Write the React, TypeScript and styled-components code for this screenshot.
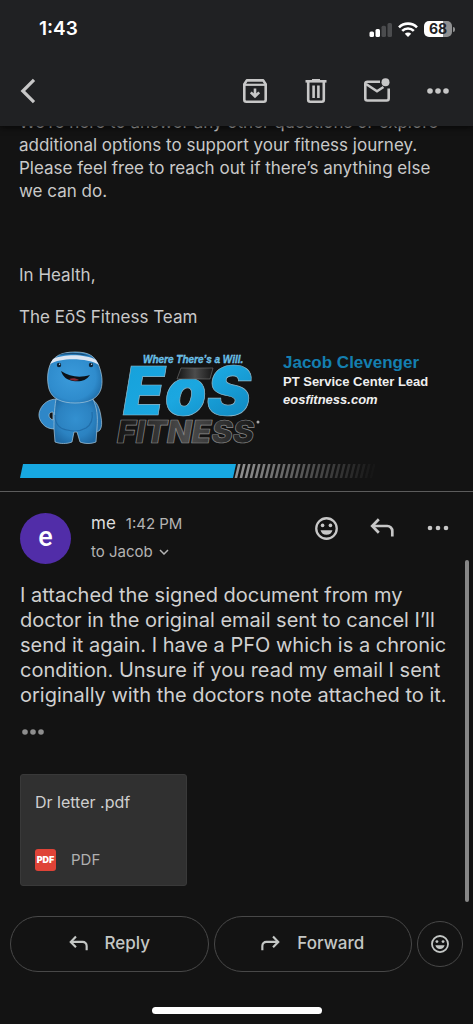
import React from "react";
import styled, { createGlobalStyle } from "styled-components";

const GlobalStyle = createGlobalStyle`
  *, *::before, *::after { box-sizing: border-box; }
  body {
    margin: 0;
    background: #131313;
    color: #c9c9c9;
    font-family: Inter, "Liberation Sans", sans-serif;
  }
  p { margin: 0; }
  button { font-family: inherit; color: inherit; cursor: pointer; }
  svg { display: block; flex: none; }
`;

const Screen = styled.div`
  min-height: 100vh;
  display: flex;
  flex-direction: column;
`;

const TopBar = styled.header`
  position: sticky;
  top: 0;
  z-index: 2;
  background: #202123;
  box-shadow: 0 1px 6px #060606;
`;

const StatusBar = styled.div`
  height: 58px;
  padding: 0 18px 0 39px;
  display: flex;
  align-items: center;
  justify-content: space-between;
`;

const Clock = styled.span`
  color: #fff;
  font-size: 19px;
  line-height: 24px;
  font-weight: 600;
`;

const StatusIcons = styled.div`
  display: flex;
  align-items: center;
  gap: 6px;
`;

const Battery = styled.span`
  display: flex;
  align-items: center;
  gap: 1px;
`;

const BatteryLevel = styled.span`
  width: 28px;
  height: 16px;
  border-radius: 5px;
  background: linear-gradient(90deg, #fff 68%, #8f9091 68%);
  color: #202123;
  font-size: 14px;
  line-height: 16px;
  font-weight: 700;
  text-align: center;
`;

const BatteryTip = styled.span`
  width: 2px;
  height: 5px;
  border-radius: 0 2px 2px 0;
  background: #8f9091;
`;

const Toolbar = styled.nav`
  height: 68px;
  padding: 0 5px 2px 0;
  display: flex;
  align-items: center;
`;

const IconButton = styled.button<{ $width: number }>`
  width: ${(p) => p.$width}px;
  height: 44px;
  padding: 0;
  border: 0;
  background: none;
  color: #c7c7c7;
  display: flex;
  align-items: center;
  justify-content: center;
`;

const Spacer = styled.div`
  flex: 1;
`;

const Thread = styled.main`
  position: relative;
  flex: 1;
`;

const EarlierMessage = styled.article`
  margin-top: -15px;
  padding: 0 19px 13px;
  border-bottom: 1px solid #5c5c5c;
  font-size: 17px;
  line-height: 23px;
`;

const Paragraph = styled.p<{ $before?: number }>`
  margin-top: ${(p) => p.$before ?? 0}px;
  white-space: nowrap;
`;

const Signature = styled.div`
  margin-top: 19px;
  display: flex;
  align-items: flex-start;
`;

const Contact = styled.address`
  padding: 5px 0 0 18px;
  color: #efefef;
  font-family: "Liberation Sans", Arial, sans-serif;
  font-size: 13px;
  line-height: 18px;
  font-weight: 700;
  font-style: normal;
  white-space: nowrap;
`;

const ContactName = styled.div`
  color: #147fb0;
  font-size: 17px;
  line-height: 20px;
`;

const SiteLink = styled.a`
  color: inherit;
  font-style: italic;
  text-decoration: none;
`;

const BarRow = styled.div`
  margin-top: 10px;
`;

const Message = styled.article`
  padding: 21px 7px 16px 20px;
`;

const MessageHeader = styled.header`
  display: flex;
  align-items: flex-start;
`;

const Avatar = styled.span`
  width: 51px;
  height: 51px;
  flex: none;
  border-radius: 50%;
  background: #512da8;
  color: #fff;
  font-family: Roboto, sans-serif;
  font-size: 27px;
  line-height: 48px;
  font-weight: 500;
  text-align: center;
`;

const Sender = styled.div`
  padding-left: 20px;
  display: flex;
  flex-direction: column;
  gap: 8px;
`;

const SenderLine = styled.div`
  display: flex;
  align-items: center;
  gap: 10px;
  font-size: 15px;
  line-height: 21px;
  color: #b4b4b4;
  white-space: nowrap;
`;

const SenderName = styled.strong`
  color: #dedede;
  font-size: 17px;
  font-weight: 400;
`;

const Recipient = styled.button`
  padding: 0;
  border: 0;
  background: none;
  display: flex;
  align-items: center;
  gap: 6px;
  font-size: 15px;
  line-height: 20px;
  color: #b4b4b4;
`;

const Actions = styled.div`
  height: 30px;
  margin-left: auto;
  display: flex;
  align-items: center;
`;

const Body = styled.p`
  margin-top: 18px;
  padding-top: 1px;
  color: #d0d0d0;
  font-size: 20px;
  line-height: 25px;
  white-space: nowrap;
`;

const QuoteToggle = styled.button`
  margin-top: 16px;
  padding: 0;
  width: 26px;
  height: 16px;
  border: 0;
  background: none;
  color: #8e8e8e;
  display: flex;
  align-items: center;
  justify-content: center;
`;

const Attachment = styled.button`
  width: 167px;
  height: 112px;
  margin-top: 34px;
  padding: 16px 14px 14px;
  border: 1px solid #393939;
  border-radius: 3px;
  background: #303030;
  display: flex;
  flex-direction: column;
  justify-content: space-between;
  text-align: left;
`;

const FileName = styled.span`
  color: #cfcfcf;
  font-size: 16px;
  line-height: 22px;
`;

const FileType = styled.span`
  display: flex;
  align-items: center;
  gap: 15px;
  color: #b0b0b0;
  font-size: 15px;
  line-height: 22px;
`;

const PdfBadge = styled.span`
  width: 21px;
  height: 22px;
  border-radius: 3px;
  background: #df4337;
  color: #fff;
  font-size: 9px;
  line-height: 22px;
  font-weight: 900;
  text-align: center;
`;

const ScrollThumb = styled.div`
  position: absolute;
  right: 4px;
  top: 434px;
  bottom: 0;
  width: 4px;
  border-radius: 2px;
  background: #878787;
`;

const Footer = styled.footer`
  padding: 14px 10px 10px;
`;

const ReplyBar = styled.div`
  display: flex;
  align-items: center;
  gap: 5px;
`;

const PillButton = styled.button`
  flex: 1;
  height: 56px;
  padding: 0 0 2px;
  border: 1px solid #484848;
  border-radius: 28px;
  background: none;
  color: #c4c7c5;
  display: flex;
  align-items: center;
  justify-content: center;
  gap: 17px;
  font-size: 17px;
  line-height: 24px;
  font-weight: 500;
`;

const RoundButton = styled.button`
  width: 46px;
  height: 46px;
  padding: 0;
  border: 1px solid #484848;
  border-radius: 50%;
  background: none;
  color: #c4c7c5;
  display: flex;
  align-items: center;
  justify-content: center;
`;

const HomeIndicator = styled.div`
  width: 170px;
  height: 7px;
  margin: 35px auto 0;
  border-radius: 4px;
  background: #fff;
`;

const Signal = () => (
  <svg width="23" height="15" viewBox="0 0 23 15" aria-hidden="true">
    <rect x="0.500" y="9.500" width="4.500" height="5.500" rx="1.500" fill="#fff" />
    <rect x="6.500" y="7" width="4.500" height="8" rx="1.500" fill="#fff" />
    <rect x="12.500" y="3.800" width="4.500" height="11.200" rx="1.500" fill="#4b4c4e" />
    <rect x="18.500" y="1" width="4.500" height="14" rx="1.500" fill="#4b4c4e" />
  </svg>
);

const Wifi = () => (
  <svg width="20" height="15" viewBox="0 0 20 15" aria-hidden="true">
    <g fill="none" stroke="#fff" strokeWidth="2.600">
      <path d="M1 5.300a12.800 12.800 0 0 1 18 0" />
      <path d="M4.200 8.900a8.200 8.200 0 0 1 11.600 0" />
    </g>
    <path d="M10 15 6.800 11.700a4.600 4.600 0 0 1 6.400 0z" fill="#fff" />
  </svg>
);

const BackIcon = () => (
  <svg width="16" height="26" viewBox="0 0 16 26" aria-hidden="true">
    <path d="M14 1.800 2.800 13 14 24.200" fill="none" stroke="currentColor" strokeWidth="3.200" />
  </svg>
);

const ArchiveIcon = () => (
  <svg width="26" height="26" viewBox="0 0 26 26" fill="none" stroke="currentColor" aria-hidden="true">
    <path d="M2.300 6.200 4.800 2.400h16.400l2.500 3.800v15.500a2 2 0 0 1-2 2H4.300a2 2 0 0 1-2-2z" strokeWidth="2.600" strokeLinejoin="round" />
    <path d="M2.500 6.800h21" strokeWidth="2.200" />
    <path d="M13 10.500v7M8.800 14.300l4.200 4.200 4.200-4.200" strokeWidth="2.600" />
  </svg>
);

const TrashIcon = () => (
  <svg width="24" height="26" viewBox="0 0 24 26" fill="none" stroke="currentColor" aria-hidden="true">
    <path d="M1.500 3.300h21" strokeWidth="2.600" />
    <path d="M8 2h8" strokeWidth="2" />
    <path d="M4.200 4v17.700a2 2 0 0 0 2 2h11.600a2 2 0 0 0 2-2V4" strokeWidth="2.600" />
    <path d="M9.600 7.500v12.500M14.400 7.500v12.500" strokeWidth="2.600" />
  </svg>
);

const UnreadIcon = () => (
  <svg width="28" height="26" viewBox="0 0 28 26" fill="none" stroke="currentColor" aria-hidden="true">
    <path d="M17 3.700H4.300a2 2 0 0 0-2 2v14.800a2 2 0 0 0 2 2h19.400a2 2 0 0 0 2-2V10.500" strokeWidth="2.600" />
    <path d="m3 6 11 7.300 6.500-4.300" strokeWidth="2.600" />
    <circle cx="22.500" cy="4.300" r="4" fill="currentColor" stroke="none" />
  </svg>
);

const Dots = ({ gap = 8, r = 2.8 }: { gap?: number; r?: number }) => (
  <svg width="24" height="8" viewBox="0 0 24 8" fill="currentColor" aria-hidden="true">
    <circle cx={12 - gap} cy="4" r={r} />
    <circle cx="12" cy="4" r={r} />
    <circle cx={12 + gap} cy="4" r={r} />
  </svg>
);

const SmileIcon = ({ size }: { size: number }) => (
  <svg width={size} height={size} viewBox="0 0 24 24" fill="currentColor" aria-hidden="true">
    <circle cx="12" cy="12" r="10.700" fill="none" stroke="currentColor" strokeWidth="2.400" />
    <circle cx="7.900" cy="8.800" r="1.900" />
    <circle cx="16.100" cy="8.800" r="1.900" />
    <path d="M5.800 13.700h12.400a6.400 6.400 0 0 1-12.400 0z" />
  </svg>
);

const ReplyIcon = ({ size, flip }: { size: number; flip?: boolean }) => (
  <svg width={size} height={size} viewBox="0 0 24 24" fill="none" stroke="currentColor" strokeWidth="2.700" aria-hidden="true">
    <g transform={flip ? "matrix(-1 0 0 1 24 0)" : undefined}>
      <path d="M8.800 3.200 2.200 10l6.600 6.800" />
      <path d="M2.500 10h14.800a5 5 0 0 1 5 5v5.500" />
    </g>
  </svg>
);

const ChevronDown = () => (
  <svg width="10" height="6" viewBox="0 0 10 6" aria-hidden="true">
    <path d="m1 1 4 4 4-4" fill="none" stroke="currentColor" strokeWidth="1.500" />
  </svg>
);

const Mascot = () => (
  <svg width="86" height="98" viewBox="0 0 86 98" role="img" aria-label="Blue mascot">
    <defs>
      <radialGradient id="head" cx="45%" cy="50%" r="62%">
        <stop offset="0" stopColor="#3b9bdb" />
        <stop offset="0.700" stopColor="#2f8ccd" />
        <stop offset="1" stopColor="#1d69a4" />
      </radialGradient>
      <radialGradient id="belly" cx="50%" cy="45%" r="62%">
        <stop offset="0" stopColor="#3390d0" />
        <stop offset="0.650" stopColor="#2b82c1" />
        <stop offset="1" stopColor="#1f6aa5" />
      </radialGradient>
    </defs>
    <g stroke="#a9c9dd" strokeWidth="0.700">
      <path d="M72 51c6 2 9 10 10 18 1 5 1 10-1 13-3 3-8 3-9-1z" fill="#2474b2" />
      <path fillRule="evenodd" d="M38 51c-8 0-14 4-17 11-2 5-1 9 2 13 3 4 7 6 13 6zM34 64v8c-3-1-4-3-4-5s2-3 4-3z" fill="#2f87c8" />
      <path d="M37 51c-2 12-2 22-2 30l1 13c5 2 12 2 17 0l2-10h3l3 10c5 2 11 2 16 0l1-14c1-12 0-20-4-29z" fill="url(#belly)" />
    </g>
    <path d="M56 4c14 0 20 4 24 14 3 8 4 16 2 23-3 10-13 14-26 14-13 0-23-4-26-14-2-8-2-16 1-24C35 8 42 4 56 4z" fill="url(#head)" stroke="#a9c9dd" strokeWidth="0.700" />
    <path d="M34 11c11-5 33-5 43 1l3 5C70 10 42 9 31 16z" fill="#dbe5f2" />
    <path d="M39 7c9-3 23-3 31 1-10-2-21-2-31-1z" fill="#174c78" />
    <path d="M42 23c9 6 19 7 29 4-4 6-10 7-17 6-6-1-10-4-12-10z" fill="#0b1117" />
    <path d="M50 31c3-1 7-1 10 1-3 1-7 1-10-1z" fill="#8b2a35" />
    <circle cx="40" cy="17" r="2.200" fill="#0d2235" />
    <circle cx="72" cy="17" r="2.200" fill="#0d2235" />
    <circle cx="40.600" cy="16.200" r="0.700" fill="#b9d9ef" />
    <circle cx="72.600" cy="16.200" r="0.700" fill="#b9d9ef" />
    <path d="M36 67c0 9 5 14 12 15 8 2 14 1 19-2 6-4 7-10 6-16" fill="none" stroke="#1c649e" strokeWidth="1.200" opacity="0.700" />
  </svg>
);

const LogoText = styled.text`
  font-family: Inter, sans-serif;
  font-weight: 900;
  font-style: italic;
`;

const Tagline = styled.text`
  font-family: "Liberation Sans", Arial, sans-serif;
  font-size: 10px;
  font-weight: 700;
  font-style: italic;
`;

const Logo = () => (
  <svg width="160" height="106" viewBox="0 0 160 106" role="img" aria-label="EōS Fitness">
    <defs>
      <linearGradient id="blue" x1="0" y1="0" x2="1" y2="1">
        <stop offset="0" stopColor="#15a0da" />
        <stop offset="0.500" stopColor="#1ba7e0" />
        <stop offset="1" stopColor="#0d80b8" />
      </linearGradient>
      <linearGradient id="steel" x1="0" y1="0" x2="1" y2="0">
        <stop offset="0" stopColor="#141414" />
        <stop offset="0.500" stopColor="#4c4c4c" />
        <stop offset="1" stopColor="#181818" />
      </linearGradient>
    </defs>
    <Tagline x="38" y="15" fill="#45b4e6" stroke="#a5d8f0" strokeWidth="0.300">Where There’s a Will.</Tagline>
    <LogoText x="18" y="67" fontSize="67" fill="url(#blue)" stroke="#8fb9cc" strokeWidth="0.700">EoS</LogoText>
    <path d="m76 20 32 0-3 11H72z" fill="url(#steel)" stroke="#777" strokeWidth="0.600" />
    <LogoText x="12" y="95" fontSize="32" fill="url(#steel)" stroke="#8a8a8a" strokeWidth="0.700">FITNESS</LogoText>
    <circle cx="153" cy="74" r="1.500" fill="#aaa" />
  </svg>
);

const STRIPES = Array.from({ length: 28 }, (_, i) => i);

const SignatureBar = () => (
  <svg width="356" height="14" viewBox="0 0 356 14" aria-hidden="true">
    <path d="M4 0h213l-3 14H1z" fill="#17a8e1" />
    {STRIPES.map((i) => (
      <path key={i} d={`M${219 + i * 5} 0h2.600l-3.400 14h-2.600z`} fill="#949494" opacity={1 - i / 28} />
    ))}
  </svg>
);

export default function App() {
  return (
    <>
      <GlobalStyle />
      <Screen>
        <TopBar>
          <StatusBar>
            <Clock>1:43</Clock>
            <StatusIcons>
              <Signal />
              <Wifi />
              <Battery>
                <BatteryLevel>68</BatteryLevel>
                <BatteryTip />
              </Battery>
            </StatusIcons>
          </StatusBar>
          <Toolbar aria-label="Conversation">
            <IconButton $width={56} aria-label="Back"><BackIcon /></IconButton>
            <Spacer />
            <IconButton $width={61} aria-label="Archive"><ArchiveIcon /></IconButton>
            <IconButton $width={61} aria-label="Delete"><TrashIcon /></IconButton>
            <IconButton $width={61} aria-label="Mark as unread"><UnreadIcon /></IconButton>
            <IconButton $width={61} aria-label="More"><Dots /></IconButton>
          </Toolbar>
        </TopBar>

        <Thread>
          <EarlierMessage>
            <Paragraph>
              We’re here to answer any other questions or explore<br />
              additional options to support your fitness journey.<br />
              Please feel free to reach out if there’s anything else<br />
              we can do.
            </Paragraph>
            <Paragraph $before={61}>In Health,</Paragraph>
            <Paragraph $before={19}>The EōS Fitness Team</Paragraph>
            <Signature>
              <Mascot />
              <Logo />
              <Contact>
                <ContactName>Jacob Clevenger</ContactName>
                <div>PT Service Center Lead</div>
                <SiteLink href="#site">eosfitness.com</SiteLink>
              </Contact>
            </Signature>
            <BarRow><SignatureBar /></BarRow>
          </EarlierMessage>

          <Message>
            <MessageHeader>
              <Avatar>e</Avatar>
              <Sender>
                <SenderLine>
                  <SenderName>me</SenderName>
                  <time>1:42 PM</time>
                </SenderLine>
                <Recipient>to Jacob <ChevronDown /></Recipient>
              </Sender>
              <Actions>
                <IconButton $width={56} aria-label="Add reaction"><SmileIcon size={23} /></IconButton>
                <IconButton $width={56} aria-label="Reply"><ReplyIcon size={24} /></IconButton>
                <IconButton $width={56} aria-label="More options"><Dots r={2.3} /></IconButton>
              </Actions>
            </MessageHeader>
            <Body>
              I attached the signed document from my<br />
              doctor in the original email sent to cancel I’ll<br />
              send it again. I have a PFO which is a chronic<br />
              condition. Unsure if you read my email I sent<br />
              originally with the doctors note attached to it.
            </Body>
            <QuoteToggle aria-label="Show quoted text"><Dots /></QuoteToggle>
            <Attachment>
              <FileName>Dr letter .pdf</FileName>
              <FileType><PdfBadge>PDF</PdfBadge>PDF</FileType>
            </Attachment>
          </Message>
          <ScrollThumb />
        </Thread>

        <Footer>
          <ReplyBar>
            <PillButton><ReplyIcon size={19} />Reply</PillButton>
            <PillButton><ReplyIcon size={19} flip />Forward</PillButton>
            <RoundButton aria-label="React"><SmileIcon size={18} /></RoundButton>
          </ReplyBar>
          <HomeIndicator />
        </Footer>
      </Screen>
    </>
  );
}
